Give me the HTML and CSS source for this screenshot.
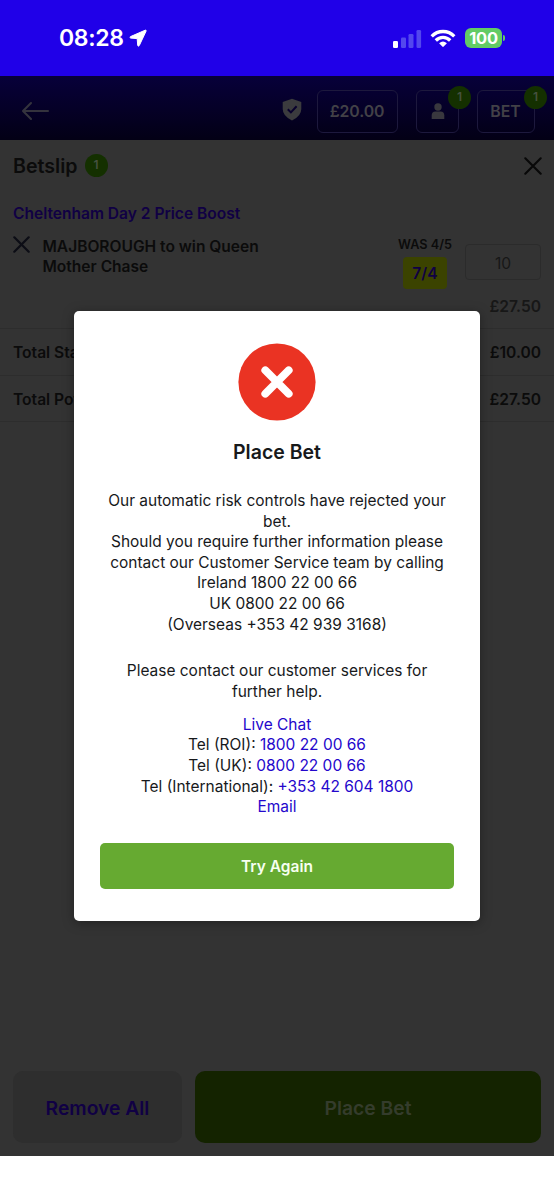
FILE: index.html
```html
<!DOCTYPE html>
<html lang="en">
<head>
<meta charset="utf-8">
<title>Betslip</title>
<link rel="stylesheet" href="styles.css">
</head>
<body>
<div class="screen">
  <div class="status">
    <span class="clock">08:28</span>
    <svg class="loc" width="18" height="19" viewBox="0 0 18 19"><path d="M16.2 1.2 1.5 7.6q-1.3.9.2 1.5l6.5.5.5 6.7q.7 1.8 1.6.2L17.1 2.1q.3-1.3-.9-.9Z" fill="#fff" stroke="#fff" stroke-linejoin="round"/></svg>
    <svg class="signal" width="30" height="19" viewBox="0 0 30 19"><rect x="1" y="12" width="5" height="7" rx="1.3" fill="#fff"/><g fill="#5347ee"><rect x="9" y="8.5" width="5" height="10.5" rx="1.3"/><rect x="16.5" y="5" width="5" height="14" rx="1.3"/><rect x="24.5" y="1" width="4.6" height="18" rx="1.3"/></g></svg>
    <svg class="wifi" width="26" height="19" viewBox="0 0 26 19"><g fill="none" stroke="#fff" stroke-width="3.3"><path d="M1.7 7.3C7.9.9 18.1.9 24.3 7.3"/><path d="M5.8 11.5C9.8 7.4 16.2 7.4 20.2 11.5"/></g><path d="M9.1 14.2Q13 11 16.9 14.2L13.7 17.6Q13 18.3 12.3 17.6Z" fill="#fff"/></svg>
    <span class="battery">100</span><i class="battery-tip"></i>
  </div>

  <header class="header">
    <svg class="back" width="29" height="20" viewBox="0 0 29 20"><path d="M10 2 2 10l8 8M2.5 10H27" fill="none" stroke="#34333d" stroke-width="2.1" stroke-linecap="round" stroke-linejoin="round"/></svg>
    <svg class="shield" width="20" height="23" viewBox="0 0 20 23"><path d="M10 .7 19.3 4v7q0 7.2-9.3 11.4Q.7 18.2.7 11V4Z" fill="#3b3b3e"/><path d="m5.8 11.2 3.1 3.2 5.7-6.2" fill="none" stroke="#08002c" stroke-width="2"/></svg>
    <div class="pill balance">£20.00</div>
    <div class="pill account"><svg width="14" height="17" viewBox="0 0 14 17"><circle cx="7" cy="4" r="3.7" fill="#39383e"/><path d="M.7 16v-3.6Q.7 8.6 4.5 8.6h5q3.8 0 3.8 3.8V16Z" fill="#39383e"/></svg><span class="badge">1</span></div>
    <div class="pill bet">BET<span class="badge">1</span></div>
  </header>

  <main class="slip">
    <div class="title"><h1>Betslip</h1><span class="count">1</span>
      <svg class="close" width="18" height="18" viewBox="0 0 18 18"><path d="m1.3 1.3 15.4 15.4M16.7 1.3 1.3 16.7" stroke="#080808" stroke-width="2.1" stroke-linecap="round"/></svg>
    </div>
    <div class="event">Cheltenham Day 2 Price Boost</div>
    <div class="selection">
      <svg class="remove" width="17" height="17" viewBox="0 0 17 17"><path d="m1.3 1.3 14.4 14.4M15.7 1.3 1.3 15.7" stroke="#0c0d15" stroke-width="2.2" stroke-linecap="round"/></svg>
      <div class="name">MAJBOROUGH to win Queen<br>Mother Chase</div>
      <div class="price"><span class="was">WAS 4/5</span><span class="odds">7/4</span></div>
      <div class="stake">10</div>
    </div>
    <div class="returns">£27.50</div>
    <div class="total"><span>Total Stake</span><span>£10.00</span></div>
    <div class="total"><span>Total Potential Returns</span><span>£27.50</span></div>
    <div class="actions"><div class="clear">Remove All</div><div class="place">Place Bet</div></div>
  </main>

  <section class="modal">
    <svg class="error" width="78" height="78" viewBox="0 0 78 78"><circle cx="39" cy="39" r="38.6" fill="#ea3323"/><path d="m27.3 27.3 23.4 23.4M50.7 27.3 27.3 50.7" stroke="#fff" stroke-width="7.8" stroke-linecap="round"/></svg>
    <h2>Place Bet</h2>
    <p class="reason">Our automatic risk controls have rejected your<br>bet.<br>Should you require further information please<br>contact our Customer Service team by calling<br>Ireland 1800 22 00 66<br>UK 0800 22 00 66<br>(Overseas +353 42 939 3168)</p>
    <p class="help">Please contact our customer services for<br>further help.</p>
    <p class="contacts"><a>Live Chat</a><br>Tel (ROI): <a>1800 22 00 66</a><br>Tel (UK): <a>0800 22 00 66</a><br>Tel (International): <a>+353 42 604 1800</a><br><a>Email</a></p>
    <div class="retry">Try Again</div>
  </section>
</div>
</body>
</html>
```
FILE: styles.css
```css
* { box-sizing: border-box; }
body { margin: 0; background: #fff; font-family: Inter, "Liberation Sans", sans-serif; }
h1, h2, p { margin: 0; }
svg { display: block; flex: none; }
.screen { position: relative; width: 554px; height: 1200px; overflow: hidden; }

.status { display: flex; align-items: center; height: 76px; padding-left: 59px; background: #2000e8; color: #fff; }
.clock { width: 65px; font-size: 23px; font-weight: 600; letter-spacing: -.3px; white-space: nowrap; }
.loc { margin-left: 5px; }
.signal { margin-left: 245px; }
.wifi { margin-left: 8px; }
.battery { width: 37px; height: 20px; margin-left: 9px; border-radius: 6px; background: #62cb65; font-size: 16.5px; font-weight: 700; line-height: 20px; text-align: center; letter-spacing: -.3px; }
.battery-tip { width: 2px; height: 6px; margin-left: 1px; border-radius: 0 2px 2px 0; background: #62cb65; }

.header { display: flex; align-items: center; height: 64px; padding: 6px 19px 0 21px; background: linear-gradient(#07003a, #030015); color: #424147; font-weight: 600; }
.shield { margin-left: 232px; margin-top: -3px; }
.pill { position: relative; display: flex; align-items: center; justify-content: center; height: 43px; border: 1px solid #1d193d; border-radius: 6px; font-size: 15.8px; }
.balance { width: 81px; margin-left: 15px; letter-spacing: -.1px; padding-right: 1px; }
.account { width: 43px; margin-left: 18px; }
.bet { width: 58px; margin-left: 18px; padding-right: 1px; }
.badge { position: absolute; top: -5px; right: -13px; width: 23px; height: 23px; border-radius: 50%; background: #143000; color: #46513f; font-size: 12px; line-height: 22px; text-align: center; }

.slip { display: flex; flex-direction: column; height: 1016px; padding-top: 13px; background: #333; color: #0b0b0b; }
.title { display: flex; align-items: center; height: 26px; padding: 0 12px 0 13px; }
.title h1 { font-size: 19.6px; font-weight: 600; line-height: 26px; }
.count { width: 23px; height: 23px; margin: -1px 0 0 7px; border-radius: 50%; background: #143000; color: #465040; font-size: 12px; font-weight: 600; line-height: 22px; text-align: center; }
.close { margin-left: auto; }
.event { height: 20px; margin: 25px 13px 0; color: #100044; font-size: 15.55px; font-weight: 600; line-height: 20px; }
.selection { display: flex; height: 60px; margin-top: 11px; padding: 0 13px; }
.remove { margin-top: 1px; }
.name { width: 340px; margin: 2px 0 0 12.5px; font-size: 15.55px; font-weight: 600; line-height: 20px; }
.price { display: flex; flex-direction: column; align-items: center; width: 64px; margin: 0 8px 0 auto; white-space: nowrap; }
.was { height: 22px; font-size: 12.7px; font-weight: 600; line-height: 19px; }
.odds { width: 44px; height: 32px; border-radius: 4px; background: #3b4300; color: #100044; font-size: 15.6px; font-weight: 600; line-height: 34px; text-align: center; }
.stake { flex: none; width: 76px; height: 36px; margin-top: 9px; border: 1px solid #2b2b2b; border-radius: 4px; color: #171717; font-size: 15.6px; line-height: 37px; text-align: center; }
.returns { height: 34px; padding-right: 13px; border-bottom: 1px solid #2d2d2d; color: #171717; font-size: 15.6px; font-weight: 600; line-height: 24px; text-align: right; }
.total { display: flex; justify-content: space-between; height: 46.5px; padding: 0 13px; border-bottom: 1px solid #2d2d2d; font-size: 15.6px; font-weight: 600; line-height: 48px; }
.actions { display: flex; gap: 13px; height: 72px; margin: auto 13px 13px; font-size: 19.3px; font-weight: 600; line-height: 74px; text-align: center; }
.clear { width: 169px; border-radius: 10px; background: #2e2e2e; color: #100044; }
.place { flex: 1; border-radius: 10px; background: #142300; color: #343c2c; }

.modal { position: absolute; top: 311px; left: 74px; width: 406px; height: 610px; padding: 32px 26px; border-radius: 5px; background: #fff; box-shadow: 0 2px 12px rgba(0,0,0,.35); color: #17191b; text-align: center; }
.error { margin: 0 auto; }
.modal h2 { margin-top: 18px; font-size: 19.5px; font-weight: 600; line-height: 27px; }
.modal p { font-size: 15.47px; line-height: 20.6px; white-space: nowrap; }
.modal .reason { margin-top: 25px; }
.modal .help { margin-top: 26px; }
.modal .contacts { margin-top: 12.5px; }
.modal a { color: #2407cc; }
.retry { height: 46px; margin-top: 25.5px; border-radius: 5px; background: #66aa31; color: #f6fff0; font-size: 15.5px; font-weight: 600; line-height: 48px; }
```
